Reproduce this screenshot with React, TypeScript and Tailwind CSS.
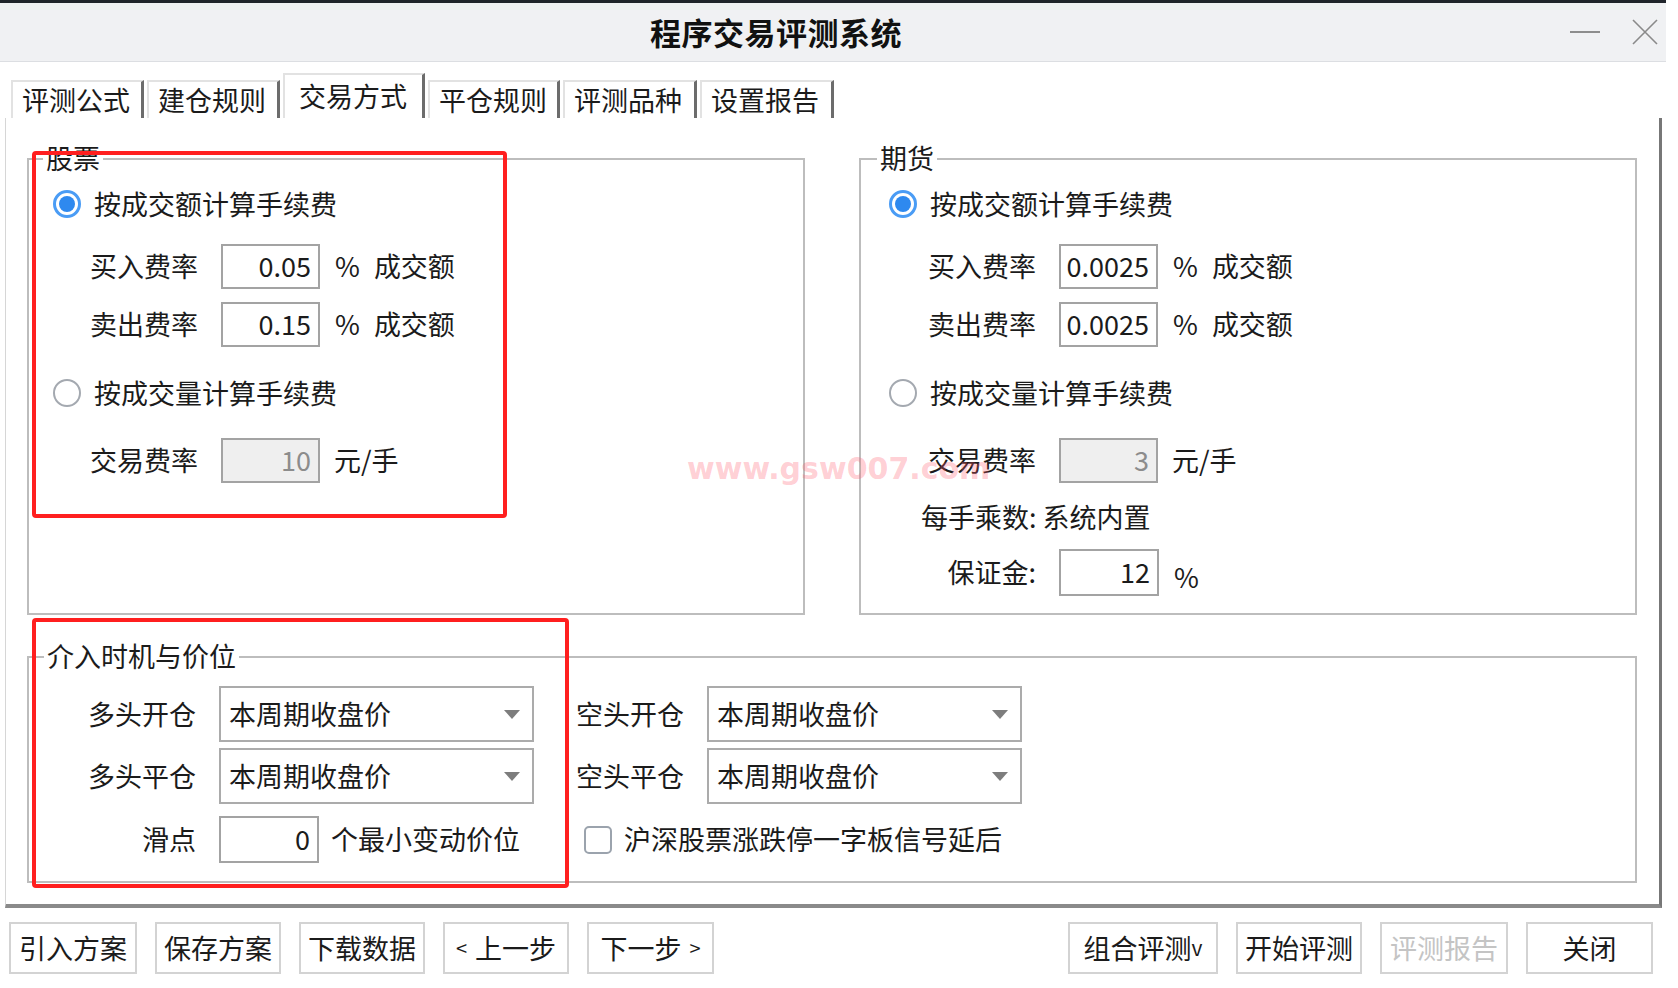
import React from 'react';

// Windows-style dialog: 程序交易评测系统 / 交易方式 tab

const Radio: React.FC<{ checked?: boolean }> = ({ checked }) =>
  checked ? (
    <span className="flex h-[28px] w-[28px] shrink-0 items-center justify-center rounded-full border-[3px] border-[#4a9cf5] bg-white">
      <span className="h-[16px] w-[16px] rounded-full bg-[#2e89ef]" />
    </span>
  ) : (
    <span className="h-[28px] w-[28px] shrink-0 rounded-full border-2 border-[#a4a9b0] bg-white" />
  );

const NumBox: React.FC<{ value: string; disabled?: boolean; wide?: boolean }> = ({ value, disabled, wide }) => (
  <div
    className={`flex shrink-0 items-center justify-end border-2 border-[#a3a3a3] pr-[7px] ${
      wide ? 'h-[47px] w-[100px]' : 'h-[45px] w-[99px]'
    } ${disabled ? 'bg-[#efefef] text-[#8c8c8c]' : 'bg-white'}`}
  >
    {value}
  </div>
);

const Select: React.FC = () => (
  <div className="flex h-[56px] w-[315px] shrink-0 items-center justify-between border-2 border-[#ababab] bg-white pl-[8px] pr-[12px]">
    <span>本周期收盘价</span>
    <svg width="16" height="9" viewBox="0 0 16 9">
      <path d="M0 0h16L8 9z" fill="#7d7d7d" />
    </svg>
  </div>
);

const Tab: React.FC<{ label: string; active?: boolean; w: string }> = ({ label, active, w }) => (
  <div
    className={`flex items-center border-l-2 border-t-2 border-[#e2e2e2] border-r-[3px] border-r-[#6c6c6c] bg-white ${w} ${
      active ? 'h-[45px] pl-[14px]' : 'h-[38px] pl-[9px]'
    }`}
  >
    {label}
  </div>
);

const Btn: React.FC<{ children: React.ReactNode; w?: string; disabled?: boolean }> = ({ children, w = 'w-[126px]', disabled }) => (
  <div
    className={`flex h-[52px] items-center justify-center border-2 border-[#d3d3d3] bg-white ${w} ${
      disabled ? 'text-[#c4c4c4]' : ''
    }`}
  >
    {children}
  </div>
);

const FeeRows: React.FC<{ futures?: boolean; buy: string; sell: string; qty: string }> = ({ futures, buy, sell, qty }) => {
  const radioPad = futures ? 'pl-[28px]' : 'pl-[24px]';
  const rowPad = futures ? 'pl-[65px]' : 'pl-[59px]';
  return (
    <>
      <div className={`mt-[22px] flex h-[44px] items-center gap-[13px] ${radioPad}`}>
        <Radio checked />
        <span>按成交额计算手续费</span>
      </div>
      <div className={`mt-[18px] flex h-[45px] items-center ${rowPad}`}>
        <span className="w-[133px] pr-[23px] text-right">买入费率</span>
        <NumBox value={buy} />
        <span className="ml-[15px]">%</span>
        <span className="ml-[14px]">成交额</span>
      </div>
      <div className={`mt-[13px] flex h-[45px] items-center ${rowPad}`}>
        <span className="w-[133px] pr-[23px] text-right">卖出费率</span>
        <NumBox value={sell} />
        <span className="ml-[15px]">%</span>
        <span className="ml-[14px]">成交额</span>
      </div>
      <div className={`mt-[24px] flex h-[44px] items-center gap-[13px] ${radioPad}`}>
        <Radio />
        <span>按成交量计算手续费</span>
      </div>
      <div className={`mt-[22px] flex h-[46px] items-center ${rowPad}`}>
        <span className="w-[133px] pr-[23px] text-right">交易费率</span>
        <NumBox value={qty} disabled />
        <span className="ml-[14px]">元/手</span>
      </div>
    </>
  );
};

const App: React.FC = () => {
  return (
    <div className="relative h-[988px] w-[1678px] overflow-hidden bg-white font-['Noto_Sans_CJK_SC','Noto_Sans',sans-serif] text-[27px] leading-[1.2] text-[#1b1b1b]">
      <div className="flex w-[1666px] flex-col">
        {/* title bar */}
        <div className="h-[3px] bg-[#20242b]" />
        <div className="flex h-[59px] items-center border-b border-[#dcdee2] bg-[#f0f1f3] pl-[650px] pr-[8px]">
          <span className="text-[31px] font-bold tracking-[0.5px] text-[#111]">程序交易评测系统</span>
          <div className="ml-auto flex items-center gap-[32px]">
            <div className="h-[2px] w-[30px] bg-[#8d8d8d]" />
            <svg width="26" height="26" viewBox="0 0 26 26">
              <path d="M1 1L25 25M25 1L1 25" stroke="#8a8a8a" strokeWidth="1.6" />
            </svg>
          </div>
        </div>

        {/* tabs */}
        <div className="flex h-[56px] items-end gap-[3px] pl-[11px]">
          <Tab label="评测公式" w="w-[133px]" />
          <Tab label="建仓规则" w="w-[133px]" />
          <Tab label="交易方式" w="w-[142px]" active />
          <Tab label="平仓规则" w="w-[132px]" />
          <Tab label="评测品种" w="w-[134px]" />
          <Tab label="设置报告" w="w-[134px]" />
        </div>

        {/* tab page */}
        <div className="ml-[5px] flex h-[790px] w-[1657px] flex-col border-l border-[#d6d6d6] border-r-[3px] border-r-[#777] border-b-[4px] border-b-[#8a8a8a] pl-[21px] pt-[40px]">
          <div className="flex gap-[54px]">
            <div className="relative flex h-[457px] w-[778px] flex-col border-2 border-[#bdbdbd]">
              <span className="absolute left-[14px] top-[-20px] bg-white px-[3px] leading-[36px]">股票</span>
              <FeeRows buy="0.05" sell="0.15" qty="10" />
            </div>
            <div className="relative flex h-[457px] w-[778px] flex-col border-2 border-[#bdbdbd]">
              <span className="absolute left-[16px] top-[-20px] bg-white px-[3px] leading-[36px]">期货</span>
              <FeeRows futures buy="0.0025" sell="0.0025" qty="3" />
              <div className="mt-[14px] flex h-[40px] items-center pl-[60px]">每手乘数: 系统内置</div>
              <div className="mt-[12px] flex h-[46px] items-center pl-[65px]">
                <span className="w-[133px] pr-[23px] text-right">保证金:</span>
                <NumBox value="12" wide />
                <span className="ml-[15px] mt-[10px]">%</span>
              </div>
            </div>
          </div>

          <div className="relative mt-[41px] flex h-[227px] w-[1610px] flex-col border-2 border-[#bdbdbd]">
            <span className="absolute left-[15px] top-[-20px] bg-white px-[3px] leading-[36px]">介入时机与价位</span>
            <div className="mt-[28px] flex h-[56px] items-center pl-[59px]">
              <div className="flex w-[488px] items-center">
                <span className="w-[131px] pr-[23px] text-right">多头开仓</span>
                <Select />
              </div>
              <span className="w-[131px]">空头开仓</span>
              <Select />
            </div>
            <div className="mt-[6px] flex h-[56px] items-center pl-[59px]">
              <div className="flex w-[488px] items-center">
                <span className="w-[131px] pr-[23px] text-right">多头平仓</span>
                <Select />
              </div>
              <span className="w-[131px]">空头平仓</span>
              <Select />
            </div>
            <div className="mt-[12px] flex h-[47px] items-center pl-[59px]">
              <div className="flex w-[488px] items-center">
                <span className="w-[131px] pr-[23px] text-right">滑点</span>
                <NumBox value="0" wide />
                <span className="ml-[12px]">个最小变动价位</span>
              </div>
              <span className="ml-[8px] h-[28px] w-[28px] rounded-[5px] border-2 border-[#9ba3ad] bg-white" />
              <span className="ml-[12px]">沪深股票涨跌停一字板信号延后</span>
            </div>
          </div>
        </div>

        {/* bottom buttons */}
        <div className="mt-[14px] flex items-center pl-[9px] pr-[13px]">
          <div className="flex gap-[18px]">
            <Btn w="w-[128px]">引入方案</Btn>
            <Btn>保存方案</Btn>
            <Btn>下载数据</Btn>
            <Btn>
              <span className="mr-[8px] text-[20px]">&lt;</span>上一步
            </Btn>
            <Btn w="w-[127px]">
              下一步<span className="ml-[8px] text-[20px]">&gt;</span>
            </Btn>
          </div>
          <div className="ml-auto flex gap-[18px]">
            <Btn w="w-[150px]">
              组合评测<span className="text-[21px]">v</span>
            </Btn>
            <Btn>开始评测</Btn>
            <Btn w="w-[128px]" disabled>
              评测报告
            </Btn>
            <Btn w="w-[127px]">关闭</Btn>
          </div>
        </div>
      </div>

      {/* red annotation frames */}
      <div className="pointer-events-none absolute left-[32px] top-[151px] h-[367px] w-[475px] rounded-[4px] border-[4px] border-[#ff1f1f]" />
      <div className="pointer-events-none absolute left-[32px] top-[618px] h-[270px] w-[537px] rounded-[4px] border-[4px] border-[#ff1f1f]" />

      {/* watermark */}
      <div className="pointer-events-none absolute left-[687px] top-[454px] font-['DejaVu_Sans',sans-serif] text-[30px] font-bold leading-[30px] text-[#ff5c70]/30">
        www.gsw007.com
      </div>
    </div>
  );
};

export default App;
